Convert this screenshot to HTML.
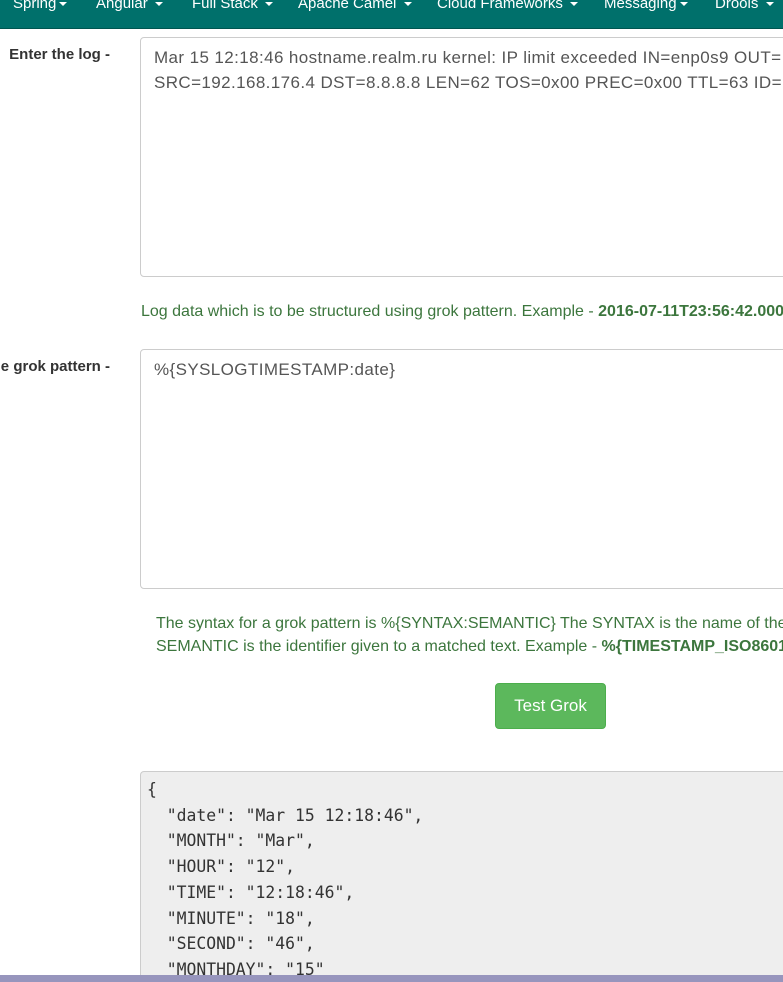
<!DOCTYPE html>
<html style="overflow:hidden;height:982px"><head><style>
body{margin:0;width:783px;height:982px;overflow:hidden;background:#fff;font-family:"Liberation Sans",sans-serif;position:relative}
.nav{position:absolute;left:0;top:0;width:783px;height:28px;background:#00706b;border-bottom:1px solid #005550}
.nav span{position:absolute;top:-5px;color:#fff;font-size:15px;white-space:nowrap}
.caret{display:inline-block;border-top:4px solid #fff;border-left:4px solid transparent;border-right:4px solid transparent;vertical-align:middle;margin-left:3px}
.lab{position:absolute;right:673px;font-weight:bold;font-size:15px;color:#333;white-space:nowrap;text-align:right}
.ta{position:absolute;left:140px;width:700px;border:1px solid #ccc;border-radius:4px;box-sizing:border-box;padding:7px 13px;font-size:17px;letter-spacing:0.4px;color:#555;line-height:25px;white-space:nowrap;overflow:hidden}
.help{position:absolute;color:#3c763d;font-size:16px;white-space:nowrap;line-height:23px}
.btn{position:absolute;left:495px;top:683px;width:111px;height:46px;background:#5cb85c;border:1px solid #4cae4c;border-radius:4px;box-sizing:border-box;color:#fff;font-size:17px;text-align:center;line-height:44px}
pre{position:absolute;left:140px;top:771px;width:700px;height:211px;margin:0;background:#eee;border:1px solid #ccc;border-bottom:none;border-radius:4px 4px 0 0;box-sizing:border-box;padding:5px 6px;font-family:"DejaVu Sans Mono","Liberation Mono",monospace;font-size:16.4px;line-height:25.7px;color:#333;overflow:hidden}
.bar{position:absolute;left:0;top:975px;width:783px;height:7px;background:#9795bd}
</style></head><body>
<div class="nav">
<span style="left:13px">Spring<i class="caret"></i></span>
<span style="left:96px">Angular <i class="caret"></i></span>
<span style="left:192px">Full Stack <i class="caret"></i></span>
<span style="left:298px">Apache Camel <i class="caret"></i></span>
<span style="left:437px">Cloud Frameworks <i class="caret"></i></span>
<span style="left:604px">Messaging<i class="caret"></i></span>
<span style="left:715px">Drools <i class="caret"></i></span>
</div>
<div class="lab" style="top:46px">Enter the log -</div>
<div class="ta" style="top:37px;height:240px">Mar 15 12:18:46 hostname.realm.ru kernel: IP limit exceeded IN=enp0s9 OUT=<br>SRC=192.168.176.4 DST=8.8.8.8 LEN=62 TOS=0x00 PREC=0x00 TTL=63 ID=</div>
<div class="help" style="left:141px;top:300px">Log data which is to be structured using grok pattern. Example - <b>2016-07-11T23:56:42.000</b></div>
<div class="lab" style="top:358px">Enter the grok pattern -</div>
<div class="ta" style="top:349px;height:240px">%{SYSLOGTIMESTAMP:date}</div>
<div class="help" style="left:156px;top:612px">The syntax for a grok pattern is %{SYNTAX:SEMANTIC} The SYNTAX is the name of the<br>SEMANTIC is the identifier given to a matched text. Example - <b>%{TIMESTAMP_ISO8601</b></div>
<div class="btn">Test Grok</div>
<pre>{
  "date": "Mar 15 12:18:46",
  "MONTH": "Mar",
  "HOUR": "12",
  "TIME": "12:18:46",
  "MINUTE": "18",
  "SECOND": "46",
  "MONTHDAY": "15"</pre>
<div class="bar"></div>
</body></html>
